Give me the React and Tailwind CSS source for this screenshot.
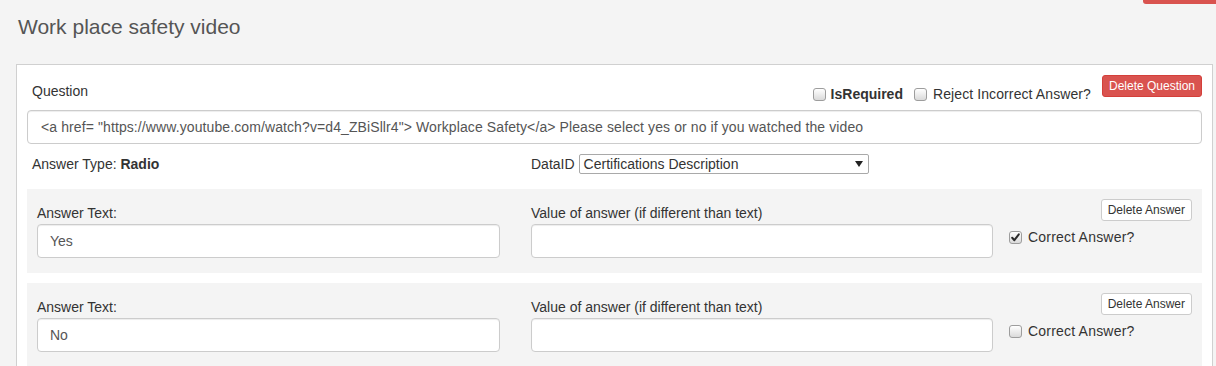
import React from "react";

function Check({ checked }) {
  return (
    <span className="inline-flex items-center justify-center w-[13px] h-[13px] shrink-0 border border-[#9d9d9d] rounded-[3px] bg-linear-to-b from-white to-[#dadada]">
      {checked && (
        <svg width="11" height="11" viewBox="0 0 11 11">
          <path d="M2.2 5.8 L4.4 8.2 L8.8 2.4" fill="none" stroke="#2b2b2b" strokeWidth="2" strokeLinecap="round" strokeLinejoin="round" />
        </svg>
      )}
    </span>
  );
}

function AnswerRow({ text, correct }) {
  return (
    <div className="flex bg-[#f4f4f4] h-[84px] px-[10px] pt-[14px]">
      <div className="w-[463px] flex flex-col">
        <div className="leading-[20px] text-[#333]">Answer Text:</div>
        <div className="mt-[1px] h-[34px] bg-white border border-[#ccc] rounded-[4px] shadow-[inset_0_1px_1px_rgba(0,0,0,0.075)] px-[12px] flex items-center text-[#555]">
          {text}
        </div>
      </div>
      <div className="w-[462px] ml-[31px] flex flex-col">
        <div className="leading-[20px] text-[#333]">Value of answer (if different than text)</div>
        <div className="mt-[1px] h-[34px] bg-white border border-[#ccc] rounded-[4px] shadow-[inset_0_1px_1px_rgba(0,0,0,0.075)]" />
      </div>
      <div className="w-[183px] ml-[16px] flex flex-col -mt-[4px]">
        <button className="self-end h-[22px] px-[6px] bg-white border border-[#ccc] rounded-[3px] text-[12px] text-[#333] leading-none">
          Delete Answer
        </button>
        <label className="mt-[6px] h-[20px] flex items-center gap-[6px] text-[#333]">
          <Check checked={correct} />
          <span className="tracking-[0.2px]">Correct Answer?</span>
        </label>
      </div>
    </div>
  );
}

export default function App() {
  return (
    <div className="w-[1216px] h-[366px] overflow-hidden bg-[#f4f4f4] text-[14px] font-['Liberation_Sans',Arial,sans-serif]">
      <div className="flex justify-end h-[4px]">
        <div className="w-[73px] h-[4px] bg-[#d9534f] rounded-bl-[3px]" />
      </div>

      <h1 className="pt-[11px] pl-[18px] text-[21px] leading-[24px] text-[#555] font-normal">
        Work place safety video
      </h1>

      <div className="mt-[25px] ml-[16px] w-[1197px] bg-white border border-[#d0d0d0] px-[10px] pt-[10px]">
        <div className="flex items-start justify-between h-[35px]">
          <div className="pl-[5px] mt-[6px] leading-[20px] text-[#333]">Question</div>
          <div className="flex items-start">
            <label className="flex items-center mt-[9px] h-[20px] text-[#333]">
              <Check />
              <span className="ml-[5px] font-bold">IsRequired</span>
            </label>
            <label className="flex items-center mt-[9px] h-[20px] ml-[11px] text-[#333]">
              <Check />
              <span className="ml-[6px] tracking-[0.1px]">Reject Incorrect Answer?</span>
            </label>
            <button className="ml-[11px] w-[100px] h-[22px] bg-[#d9534f] border border-[#d43f3a] rounded-[3px] text-white text-[12px] leading-none">
              Delete Question
            </button>
          </div>
        </div>

        <div className="h-[34px] border border-[#ccc] rounded-[4px] shadow-[inset_0_1px_1px_rgba(0,0,0,0.075)] px-[13px] flex items-center text-[#555] whitespace-nowrap tracking-[0.1px]">
          {'<a href= "https://www.youtube.com/watch?v=d4_ZBiSllr4"> Workplace Safety</a> Please select yes or no if you watched the video'}
        </div>

        <div className="mt-[10px] h-[20px] flex items-center text-[#333]">
          <div className="w-[504px] pl-[5px]">
            Answer Type: <span className="font-bold">Radio</span>
          </div>
          <span>DataID</span>
          <div className="ml-[4px] w-[290px] h-[20px] border border-[#a9a9a9] rounded-[2px] pl-[4px] pr-[5px] flex items-center justify-between">
            <span>Certifications Description</span>
            <svg width="8" height="6" viewBox="0 0 8 6">
              <polygon points="0,0 8,0 4,6" fill="#222" />
            </svg>
          </div>
        </div>

        <div className="mt-[15px] flex flex-col gap-[10px]">
          <AnswerRow text="Yes" correct />
          <AnswerRow text="No" />
        </div>
      </div>
    </div>
  );
}
